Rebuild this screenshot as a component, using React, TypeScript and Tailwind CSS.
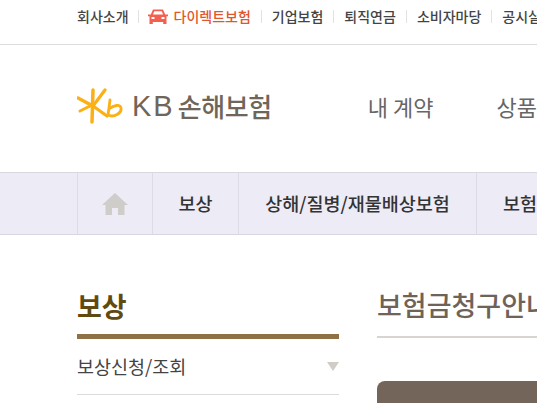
const font = "font-['Noto_Sans_CJK_KR','Noto_Sans',sans-serif]";

const topLinks = ["기업보험", "퇴직연금", "소비자마당", "공시실"];

function CarIcon() {
  return (
    <svg width="20" height="15" viewBox="0 0 20 15" className="shrink-0">
      <path d="M5 .5h10l2.200 5H20v1.800h-1.500V15h-3.300v-2H4.800v2H1.500V7.300H0V5.500h2.800z" fill="#f4604f" />
      <path d="M6.300 2.300h7.400l1.400 3.200H4.900z" fill="#fff" />
      <rect x="3.500" y="8" width="3" height="2" fill="#fff" />
      <rect x="13.500" y="8" width="3" height="2" fill="#fff" />
    </svg>
  );
}

function KbLogo() {
  return (
    <svg width="46" height="36" viewBox="0 0 46 36" className="shrink-0">
      <g fill="none" stroke="#fbb116" strokeLinecap="round" strokeLinejoin="round">
        <path d="M1 10 L14 17" strokeWidth="3.500" />
        <path d="M16 2 L15 34" strokeWidth="3.500" />
        <path d="M3 23 L13 18" strokeWidth="3" />
        <path d="M28 2 L16 18 L30 28" strokeWidth="3.200" />
        <path d="M33 12 L31 27 C37 30 45 25 44 20 C43 16 37 17 32 21" strokeWidth="2.800" />
      </g>
    </svg>
  );
}

export default function App() {
  return (
    <div className={`w-[537px] h-[403px] overflow-hidden bg-white ${font}`}>
      <div className="h-[45px] border-b border-[#dcdcdc] pl-[77px] pt-[7px] flex items-start whitespace-nowrap text-[14px] leading-[18px] font-medium text-[#444]">
        <span className="shrink-0">회사소개</span>
        <span className="shrink-0 w-px h-[13px] bg-[#e2e2e2] mx-[9px] mt-[3px]" />
        <span className="shrink-0 flex items-center gap-[6px] text-[#e2562c]">
          <CarIcon />
          다이렉트보험
        </span>
        {topLinks.map((t) => (
          <span key={t} className="shrink-0 flex items-start">
            <span className="w-px h-[13px] bg-[#e2e2e2] mx-[10px] mt-[3px]" />
            <span>{t}</span>
          </span>
        ))}
      </div>

      <div className="h-[127px] pl-[77px] pb-[5px] flex items-center whitespace-nowrap">
        <KbLogo />
        <span className="ml-[9px] text-[29px] leading-none tracking-[2px] text-[#6f6559] font-['Liberation_Sans',sans-serif]">KB</span>
        <span className="ml-[3px] text-[26px] leading-none font-medium tracking-[-0.4px] text-[#6f6559]">손해보험</span>
        <span className="ml-[96px] text-[22px] text-[#666]">내 계약</span>
        <span className="ml-[63px] text-[22px] text-[#666]">상품</span>
      </div>

      <div className="h-[63px] border-y border-[#d8d6e0] bg-[#edebf6] pl-[77px] flex whitespace-nowrap text-[18.500px] font-medium text-[#333]">
        <div className="shrink-0 w-[76px] border-x border-[#dddbe5] flex items-center justify-center">
          <svg width="26" height="22" viewBox="0 0 26 22">
            <path d="M13 0 L26 12 H22.500 V22 H16 V15 H10 V22 H3.500 V12 H0 Z" fill="#cfcdc9" />
          </svg>
        </div>
        <div className="shrink-0 w-[86px] border-r border-[#dddbe5] flex items-center justify-center">보상</div>
        <div className="shrink-0 w-[238px] border-r border-[#dddbe5] flex items-center justify-center">상해/질병/재물배상보험</div>
        <div className="shrink-0 pl-[26px] flex items-center">보험금청구안내</div>
      </div>

      <div className="pl-[77px] pt-[50px] flex whitespace-nowrap">
        <div className="w-[262px] shrink-0">
          <div className="h-[49px] border-b-[5px] border-[#8f7146] box-content text-[27px] leading-[41px] font-bold text-[#5f4a12]">보상</div>
          <div className="h-[56px] border-b border-[#dcdcdc] flex items-center justify-between text-[18.500px] text-[#444]">
            보상신청/조회
            <span className="w-0 h-0 border-x-[6px] border-x-transparent border-t-[9px] border-t-[#cfcdc6]" />
          </div>
        </div>
        <div className="ml-[38px] w-[300px] shrink-0">
          <div className="h-[51px] border-b-2 border-[#d8d4d0] box-content text-[27px] leading-[40px] font-medium text-[#6f6257]">보험금청구안내</div>
          <div className="mt-[43px] h-[60px] rounded-t-[8px] bg-[#73655a]" />
        </div>
      </div>
    </div>
  );
}
